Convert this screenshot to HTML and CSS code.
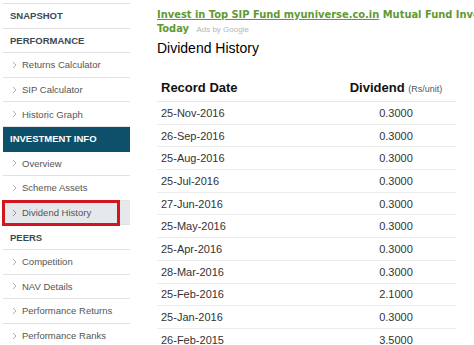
FILE: index.html
```html
<!DOCTYPE html>
<html>
<head>
<meta charset="utf-8">
<link rel="stylesheet" href="styles.css">
</head>
<body>
<div class="page">
  <nav class="sidebar">
    <div class="item head">SNAPSHOT</div>
    <div class="item head">PERFORMANCE</div>
    <div class="item link"><svg class="chev" width="5" height="8" viewBox="0 0 5 8"><path d="M1 1 L4 4 L1 7" fill="none" stroke="#b0b0b0" stroke-width="1"/></svg>Returns Calculator</div>
    <div class="item link"><svg class="chev" width="5" height="8" viewBox="0 0 5 8"><path d="M1 1 L4 4 L1 7" fill="none" stroke="#b0b0b0" stroke-width="1"/></svg>SIP Calculator</div>
    <div class="item link"><svg class="chev" width="5" height="8" viewBox="0 0 5 8"><path d="M1 1 L4 4 L1 7" fill="none" stroke="#b0b0b0" stroke-width="1"/></svg>Historic Graph</div>
    <div class="item head active">INVESTMENT INFO</div>
    <div class="item link"><svg class="chev" width="5" height="8" viewBox="0 0 5 8"><path d="M1 1 L4 4 L1 7" fill="none" stroke="#b0b0b0" stroke-width="1"/></svg>Overview</div>
    <div class="item link"><svg class="chev" width="5" height="8" viewBox="0 0 5 8"><path d="M1 1 L4 4 L1 7" fill="none" stroke="#b0b0b0" stroke-width="1"/></svg>Scheme Assets</div>
    <div class="item link current"><svg class="chev" width="5" height="8" viewBox="0 0 5 8"><path d="M1 1 L4 4 L1 7" fill="none" stroke="#8a9aae" stroke-width="1"/></svg>Dividend History</div>
    <div class="item head">PEERS</div>
    <div class="item link"><svg class="chev" width="5" height="8" viewBox="0 0 5 8"><path d="M1 1 L4 4 L1 7" fill="none" stroke="#b0b0b0" stroke-width="1"/></svg>Competition</div>
    <div class="item link"><svg class="chev" width="5" height="8" viewBox="0 0 5 8"><path d="M1 1 L4 4 L1 7" fill="none" stroke="#b0b0b0" stroke-width="1"/></svg>NAV Details</div>
    <div class="item link"><svg class="chev" width="5" height="8" viewBox="0 0 5 8"><path d="M1 1 L4 4 L1 7" fill="none" stroke="#b0b0b0" stroke-width="1"/></svg>Performance Returns</div>
    <div class="item link"><svg class="chev" width="5" height="8" viewBox="0 0 5 8"><path d="M1 1 L4 4 L1 7" fill="none" stroke="#b0b0b0" stroke-width="1"/></svg>Performance Ranks</div>
  </nav>
  <main class="content">
    <div class="ad">
      <div class="ad-line"><a class="ad-link" href="#">Invest in Top SIP Fund myuniverse.co.in</a> Mutual Fund Investment</div>
      <div class="ad-line">Today <span class="ads-by">Ads by Google</span></div>
    </div>
    <h1 class="title">Dividend History</h1>
    <table class="divs">
      <thead>
        <tr><th class="c-date">Record Date</th><th class="c-val">Dividend <span class="unit">(Rs/unit)</span></th></tr>
      </thead>
      <tbody>
        <tr><td>25-Nov-2016</td><td class="c-val">0.3000</td></tr>
        <tr><td>26-Sep-2016</td><td class="c-val">0.3000</td></tr>
        <tr><td>25-Aug-2016</td><td class="c-val">0.3000</td></tr>
        <tr><td>25-Jul-2016</td><td class="c-val">0.3000</td></tr>
        <tr><td>27-Jun-2016</td><td class="c-val">0.3000</td></tr>
        <tr><td>25-May-2016</td><td class="c-val">0.3000</td></tr>
        <tr><td>25-Apr-2016</td><td class="c-val">0.3000</td></tr>
        <tr><td>28-Mar-2016</td><td class="c-val">0.3000</td></tr>
        <tr><td>25-Feb-2016</td><td class="c-val">2.1000</td></tr>
        <tr><td>25-Jan-2016</td><td class="c-val">0.3000</td></tr>
        <tr><td>26-Feb-2015</td><td class="c-val">3.5000</td></tr>
      </tbody>
    </table>
  </main>
</div>
</body>
</html>
```

FILE: styles.css
```css
html, body {
  margin: 0;
  padding: 0;
  background: #fff;
  overflow: hidden;
}
body {
  font-family: "Liberation Sans", Arial, sans-serif;
  width: 474px;
  height: 345px;
}
.page {
  display: flex;
  align-items: flex-start;
}
.sidebar {
  flex: 0 0 127px;
  margin-left: 3px;
  margin-top: 3px;
  border-top: 1px solid #e2e2e2;
}
.item {
  box-sizing: border-box;
  height: 24.6px;
  border-bottom: 1px solid #e2e2e2;
  display: flex;
  align-items: center;
  font-size: 9.5px;
  white-space: nowrap;
}
.head {
  padding-left: 7px;
  font-weight: bold;
  color: #3a4a52;
}
.head.active {
  background: #0e5069;
  color: #fff;
  border-bottom-color: #0e5069;
}
.link {
  padding-left: 9px;
  color: #555;
}
.chev {
  margin-right: 5px;
  flex: none;
}
.current {
  background: #e6e9ec;
  position: relative;
}
.current::after {
  content: "";
  position: absolute;
  left: -1px;
  top: -1px;
  width: 112px;
  height: 20px;
  border: 3px solid #d2151f;
}
.content {
  margin-left: 27px;
  flex: 1;
  min-width: 0;
}
.ad {
  padding-top: 8px;
  font-family: "DejaVu Sans Condensed", "DejaVu Sans", sans-serif;
  font-weight: bold;
  font-size: 11px;
  line-height: 14px;
  color: #5f9a32;
}
.ad-line {
  white-space: nowrap;
}
.ad-link {
  color: #5f9a32;
  text-decoration: underline;
}
.ads-by {
  font-family: "Liberation Sans", Arial, sans-serif;
  font-weight: normal;
  font-size: 8px;
  color: #b5b5b5;
  margin-left: 4px;
}
.title {
  margin: 3px 0 0 0;
  font-size: 14px;
  font-weight: normal;
  line-height: 17px;
  color: #000;
}
.divs {
  margin-top: 17px;
  width: 299px;
  border-collapse: collapse;
  font-size: 11px;
  color: #333;
}
.divs th {
  height: 27px;
  font-size: 13px;
  font-weight: bold;
  color: #111;
  text-align: left;
  padding: 0 0 0 4px;
  border-bottom: 1px solid #e8e8e8;
}
.divs th.c-val {
  text-align: center;
  padding: 0;
}
.unit {
  font-size: 9px;
  font-weight: normal;
  color: #555;
}
.divs td {
  height: 22.7px;
  box-sizing: border-box;
  padding: 0 0 0 4px;
  border-bottom: 1px solid #ececec;
}
.divs td.c-val {
  text-align: center;
  padding: 0;
  width: 120px;
}
```
